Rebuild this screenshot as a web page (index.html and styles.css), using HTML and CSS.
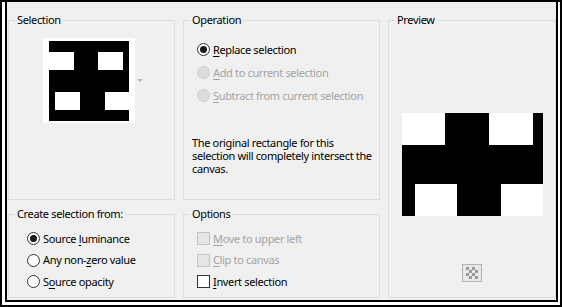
FILE: index.html
```html
<!DOCTYPE html>
<html lang="en">
<head>
    <meta charset="UTF-8">
    <title>Create Selection</title>
    <link rel="stylesheet" href="styles.css">
</head>
<body>
    <div class="frame">
        <div class="dialog">
            <div class="layout">
                <fieldset class="group sel">
                    <legend>Selection</legend>
                    <div class="thumb-row">
                        <svg class="thumb" width="92" height="85" viewBox="0 0 92 85">
                            <rect width="92" height="85" fill="#fff"/>
                            <rect x="6" y="3" width="80" height="80" fill="#000"/>
                            <rect x="6" y="14" width="25" height="18" fill="#fff"/>
                            <rect x="55" y="14" width="25" height="18" fill="#fff"/>
                            <rect x="12" y="54" width="25" height="18" fill="#fff"/>
                            <rect x="62" y="54" width="24" height="18" fill="#fff"/>
                        </svg>
                        <span class="drop-arrow"></span>
                    </div>
                </fieldset>

                <fieldset class="group op">
                    <legend>Operation</legend>
                    <div class="group-body">
                        <div class="opt"><span class="radio checked"></span><span><u>R</u>eplace selection</span></div>
                        <div class="opt off"><span class="radio"></span><span><u>A</u>dd to current selection</span></div>
                        <div class="opt off"><span class="radio"></span><span><u>S</u>ubtract from current selection</span></div>
                        <p class="note">The original rectangle for this selection will completely intersect the canvas.</p>
                    </div>
                </fieldset>

                <fieldset class="group preview">
                    <legend>Preview</legend>
                    <svg class="preview-img" width="141" height="103" viewBox="0 0 141 103">
                        <rect width="141" height="103" fill="#000"/>
                        <rect x="0" y="0" width="43" height="32" fill="#fff"/>
                        <rect x="87" y="0" width="44" height="32" fill="#fff"/>
                        <rect x="13" y="71" width="42" height="32" fill="#fff"/>
                        <rect x="99" y="71" width="42" height="32" fill="#fff"/>
                    </svg>
                    <!-- transparency toggle -->
                    <svg class="checker" width="20" height="18" viewBox="0 0 20 18">
                        <rect x="0.5" y="0.5" width="19" height="17" fill="#e8e8e8" stroke="#b4b4b4"/>
                        <g fill="#9a9a9a">
                            <rect x="4" y="3" width="3" height="3"/><rect x="10" y="3" width="3" height="3"/>
                            <rect x="7" y="6" width="3" height="3"/><rect x="13" y="6" width="3" height="3"/>
                            <rect x="4" y="9" width="3" height="3"/><rect x="10" y="9" width="3" height="3"/>
                            <rect x="7" y="12" width="3" height="3"/><rect x="13" y="12" width="3" height="3"/>
                        </g>
                    </svg>
                </fieldset>

                <fieldset class="group create">
                    <legend>Create selection from:</legend>
                    <div class="group-body">
                        <div class="opt"><span class="radio checked"></span><span>Source <u>l</u>uminance</span></div>
                        <div class="opt"><span class="radio"></span><span>Any non-<u>z</u>ero value</span></div>
                        <div class="opt"><span class="radio"></span><span>S<u>o</u>urce opacity</span></div>
                    </div>
                </fieldset>

                <fieldset class="group options">
                    <legend>Options</legend>
                    <div class="group-body">
                        <div class="opt off"><span class="check"></span><span><u>M</u>ove to upper left</span></div>
                        <div class="opt off"><span class="check"></span><span><u>C</u>lip to canvas</span></div>
                        <div class="opt"><span class="check"></span><span><u>I</u>nvert selection</span></div>
                    </div>
                </fieldset>
            </div>
        </div>
    </div>
</body>
</html>
```

FILE: styles.css
```css
body {
    margin: 0;
    font-family: 'Noto Sans', sans-serif;
    font-size: 11px;
    letter-spacing: -0.35px;
    color: #000;
}
.frame {
    width: 562px;
    height: 307px;
    box-sizing: border-box;
    border: 2px solid #000;
    padding: 0 2px 3px 3px;
    background-color: #fff;
}
.dialog {
    height: 100%;
    box-sizing: border-box;
    border: 2px solid #000;
    border-top: none;
    background-color: #f0f0f0;
}
.layout {
    display: grid;
    grid-template-columns: 167px 197px 168px;
    grid-template-rows: 187px 91px;
    column-gap: 8px;
    row-gap: 7px;
    padding: 11px 0 0 1px;
}
.group {
    margin: 0;
    padding: 0;
    min-width: 0;
    border: 1px solid #dcdcdc;
}
.group legend {
    margin-left: 6px;
    padding: 0 2px;
    line-height: 14px;
}
.preview {
    grid-row: 1 / span 2;
    grid-column: 3;
    display: flex;
    flex-direction: column;
    align-items: center;
}
.thumb-row {
    display: flex;
    align-items: center;
    margin: 11px 0 0 34px;
}
.thumb {
    display: block;
}
.drop-arrow {
    margin-left: 2px;
    width: 0;
    height: 0;
    border-left: 3px solid transparent;
    border-right: 3px solid transparent;
    border-top: 3px solid #b8b8b8;
}
.op .group-body {
    padding: 11px 4px 0 13px;
}
.create .group-body {
    padding: 7px 4px 0 18px;
}
.options .group-body {
    padding: 7px 4px 0 13px;
}
.opt {
    display: flex;
    align-items: center;
    gap: 3px;
    height: 23px;
    line-height: 14px;
}
.create .opt, .options .opt {
    height: 21.5px;
}
.opt u {
    text-decoration-thickness: 1px;
    text-underline-offset: 2px;
}
.opt.off {
    color: #a3a3a3;
}
.radio {
    width: 13px;
    height: 13px;
    box-sizing: border-box;
    border: 1px solid #333;
    border-radius: 50%;
    background-color: #fff;
    display: flex;
    align-items: center;
    justify-content: center;
    flex-shrink: 0;
}
.radio.checked::after {
    content: "";
    width: 7px;
    height: 7px;
    border-radius: 50%;
    background-color: #1a1a1a;
}
.off .radio {
    border-color: #cfcfcf;
    background-color: #dcdcdc;
}
.check {
    width: 13px;
    height: 13px;
    box-sizing: border-box;
    border: 1px solid #333;
    background-color: #fff;
    flex-shrink: 0;
}
.off .check {
    border-color: #c4c4c4;
    background-color: #e6e6e6;
}
.note {
    margin: 29px 0 0 -5px;
    line-height: 13px;
}
.preview-img {
    display: block;
    margin-top: 86px;
}
.checker {
    display: block;
    margin-top: 48px;
}
```
